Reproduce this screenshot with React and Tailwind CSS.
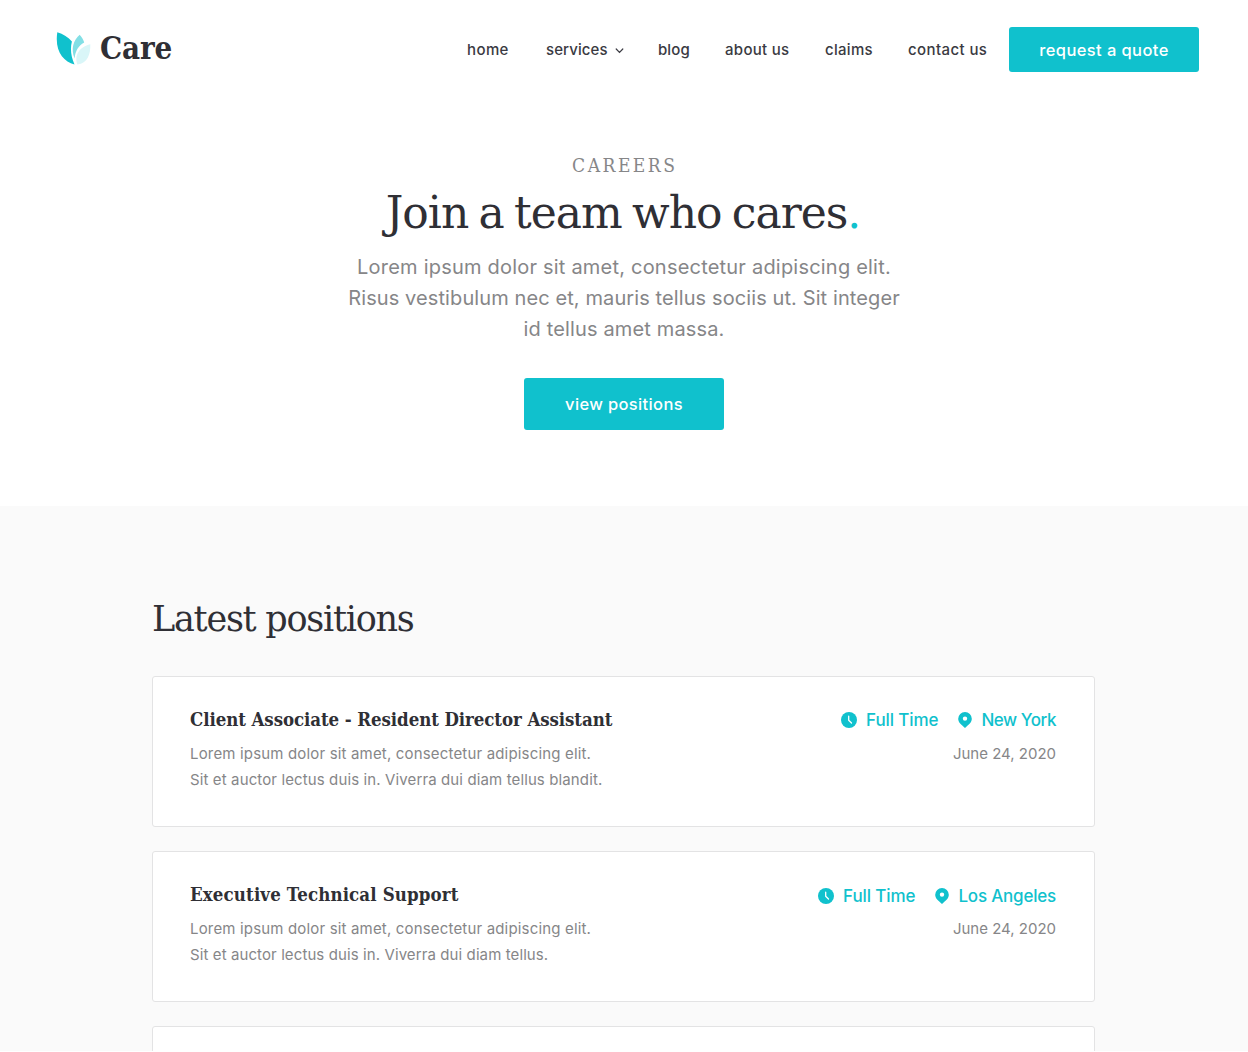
/**
 * Careers page
 *
 * Header navigation, hero and the list of latest open positions.
 */

import React from 'react';
import clsx from 'clsx';

const NAV_ITEMS = [
  { label: 'home', className: 'w-[79px] tracking-[0.4px]' },
  { label: 'services', className: 'w-[112px] tracking-[0.1px]', hasMenu: true },
  { label: 'blog', className: 'w-[67px] tracking-[0.1px]' },
  { label: 'about us', className: 'w-[100px] tracking-[0.3px]' },
  { label: 'claims', className: 'w-[83px] tracking-[0.3px]' },
  { label: 'contact us', className: 'w-[101px] tracking-[0.4px]' },
];

const POSITIONS = [
  {
    title: 'Client Associate - Resident Director Assistant',
    titleClass: 'tracking-[-0.08px]',
    lines: [
      { text: 'Lorem ipsum dolor sit amet, consectetur adipiscing elit.', className: 'tracking-[0.17px]' },
      { text: 'Sit et auctor lectus duis in. Viverra dui diam tellus blandit.', className: 'tracking-[0.12px]' },
    ],
    type: 'Full Time',
    location: 'New York',
    locationClass: 'tracking-[-0.45px]',
    metaClass: 'pr-px',
    dateClass: 'mt-2',
    date: 'June 24, 2020',
  },
  {
    title: 'Executive Technical Support',
    titleClass: 'tracking-[0.13px]',
    lines: [
      { text: 'Lorem ipsum dolor sit amet, consectetur adipiscing elit.', className: 'tracking-[0.17px]' },
      { text: 'Sit et auctor lectus duis in. Viverra dui diam tellus.', className: 'tracking-[0.1px]' },
    ],
    type: 'Full Time',
    location: 'Los Angeles',
    locationClass: 'tracking-[-0.2px]',
    metaClass: 'pt-[1.5px] pr-px',
    dateClass: 'mt-[7px]',
    date: 'June 24, 2020',
  },
];

const SERIF = "font-['DejaVu_Serif',serif]";
const SERIF_NARROW = "font-['DejaVu_Serif_Condensed','DejaVu_Serif',serif]";

export default function App() {
  return (
    <div className="h-[1052px] overflow-hidden bg-white font-['Inter',sans-serif] text-[#2f2f35]">
      <div className="h-[1051px] overflow-hidden">
        <Header />
        <Hero />
        <Positions />
      </div>
    </div>
  );
}

function Header() {
  return (
    <header className="flex h-[99px] items-center pl-14 pr-[49px]">
      <a href="#" className="flex items-center pb-[2px]">
        <Logo />
        <span className={clsx(SERIF_NARROW, 'ml-2 pb-px text-[31px] leading-none font-bold tracking-[-0.2px]')}>
          Care
        </span>
      </a>

      <nav className="ml-auto flex pt-0.5 text-[15px] font-medium text-[#3a3a42]">
        {NAV_ITEMS.map((item) => (
          <a
            key={item.label}
            href="#"
            className={clsx('flex items-center whitespace-nowrap', item.className)}
          >
            {item.label}
            {item.hasMenu && (
              <svg className="mt-0.5 ml-[7px] h-[9px] w-[9px]" viewBox="0 0 9 9" fill="none">
                <path d="M1.2 2 4.500 5.300 7.800 2" stroke="currentColor" strokeWidth="1.2" strokeLinecap="round" />
              </svg>
            )}
          </a>
        ))}
      </nav>

      <button className="h-[45px] w-[190px] rounded-[3px] bg-[#10c1cd] pt-px text-[16.5px] font-medium tracking-[0.4px] text-white">
        request a quote
      </button>
    </header>
  );
}

function Hero() {
  return (
    <section className="flex h-[406.5px] flex-col items-center pt-[54px] text-center">
      <p className={clsx(SERIF_NARROW, 'pl-[1.5px] text-[19px] leading-6 tracking-[2.5px] text-[#868688]')}>
        CAREERS
      </p>
      <h1 className={clsx(SERIF, 'mt-2 mr-[2px] text-[44px] leading-[56px] tracking-[-1px] [word-spacing:-2.7px] whitespace-nowrap')}>
        Join a team who cares<span className="text-[#10c1cd]">.</span>
      </h1>
      <p className="mt-[11px] text-[20px] leading-[31px] whitespace-nowrap text-[#868688]">
        <span className="tracking-[0.21px]">Lorem ipsum dolor sit amet, consectetur adipiscing elit.</span>
        <br />
        <span className="tracking-[0.1px]">Risus vestibulum nec et, mauris tellus sociis ut. Sit integer</span>
        <br />
        <span className="tracking-[0.15px]">id tellus amet massa.</span>
      </p>
      <button className="mt-[33px] h-[52px] w-[200px] shrink-0 rounded-[3px] bg-[#10c1cd] text-[16.5px] font-medium tracking-[0.35px] text-white">
        view positions
      </button>
    </section>
  );
}

function Positions() {
  return (
    <section className="h-[600px] bg-[#fafafa] pt-[89px] pl-[152px]">
      <h2 className={clsx(SERIF, 'text-[35px] leading-[48px] tracking-[-1.25px]')}>Latest positions</h2>
      <div className="mt-[33.1px] flex w-[943px] flex-col gap-[24.3px]">
        {POSITIONS.map((position) => (
          <PositionCard key={position.title} position={position} />
        ))}
        <div className="h-[151px] rounded-[3px] border border-[#e3e3e4] bg-white" />
      </div>
    </section>
  );
}

function PositionCard({ position }) {
  return (
    <article className="flex h-[151px] shrink-0 justify-between rounded-[3px] border border-[#e3e3e4] bg-white pt-[30px] pr-[37px] pl-[37px]">
      <div className="whitespace-nowrap">
        <h3 className={clsx(SERIF_NARROW, 'text-[18.5px] leading-[26px] font-bold', position.titleClass)}>
          {position.title}
        </h3>
        <p className="mt-[8.4px] text-[15px] leading-[26px] text-[#868688]">
          {position.lines.map((line) => (
            <span key={line.text} className={clsx('block', line.className)}>
              {line.text}
            </span>
          ))}
        </p>
      </div>

      <div className={clsx('flex flex-col items-end whitespace-nowrap', position.metaClass)}>
        <div className="flex h-[26px] items-center text-[17px] leading-[26px] font-medium text-[#10c1cd]">
          <ClockIcon />
          <span className="ml-[9px] tracking-[-0.1px]">{position.type}</span>
          <PinIcon />
          <span className={clsx('ml-[9px]', position.locationClass)}>{position.location}</span>
        </div>
        <p className={clsx('text-[15px] leading-[26px] text-[#868688]', position.dateClass)}>
          {position.date}
        </p>
      </div>
    </article>
  );
}

function Logo() {
  return (
    <svg className="h-[36px] w-[36px]" viewBox="0 0 36 36" fill="none">
      <path d="M1.3 1.2C7 3 12.500 6 15.900 10.500C14 18 15 25.500 18.500 33.600C7 30.500-1.500 20 1.300 1.200Z" fill="#10c1cd" />
      <path d="M23.700 3.800C25.600 6 27.300 8.500 28.200 11.400C22.500 14.800 19.300 19.500 18.600 27.500C14.700 18.500 17.200 9 23.700 3.800Z" fill="#82dfe5" />
      <path d="M34.300 13.200C34.600 23.500 31.500 32 21.400 33.600C17.800 24.500 23.500 15.500 34.300 13.200Z" fill="#d9f6f8" />
    </svg>
  );
}

function ClockIcon() {
  return (
    <svg className="h-4 w-4" viewBox="0 0 16 16" fill="none">
      <circle cx="8" cy="8" r="8" fill="currentColor" />
      <path d="M7.700 4.200V8.200L10.500 11" stroke="white" strokeWidth="1.300" strokeLinecap="round" strokeLinejoin="round" />
    </svg>
  );
}

function PinIcon() {
  return (
    <svg className="ml-5 h-4 w-[14px]" viewBox="0 0 14 16">
      <path
        fillRule="evenodd"
        d="M7 0a6.800 6.800 0 0 1 6.800 6.800c0 3.700-3 5.800-6.800 9.200C3.200 12.600.2 10.500.2 6.800A6.800 6.800 0 0 1 7 0Zm0 4.400a2.200 2.200 0 1 0 0 4.400 2.200 2.200 0 0 0 0-4.400Z"
        fill="currentColor"
      />
    </svg>
  );
}
